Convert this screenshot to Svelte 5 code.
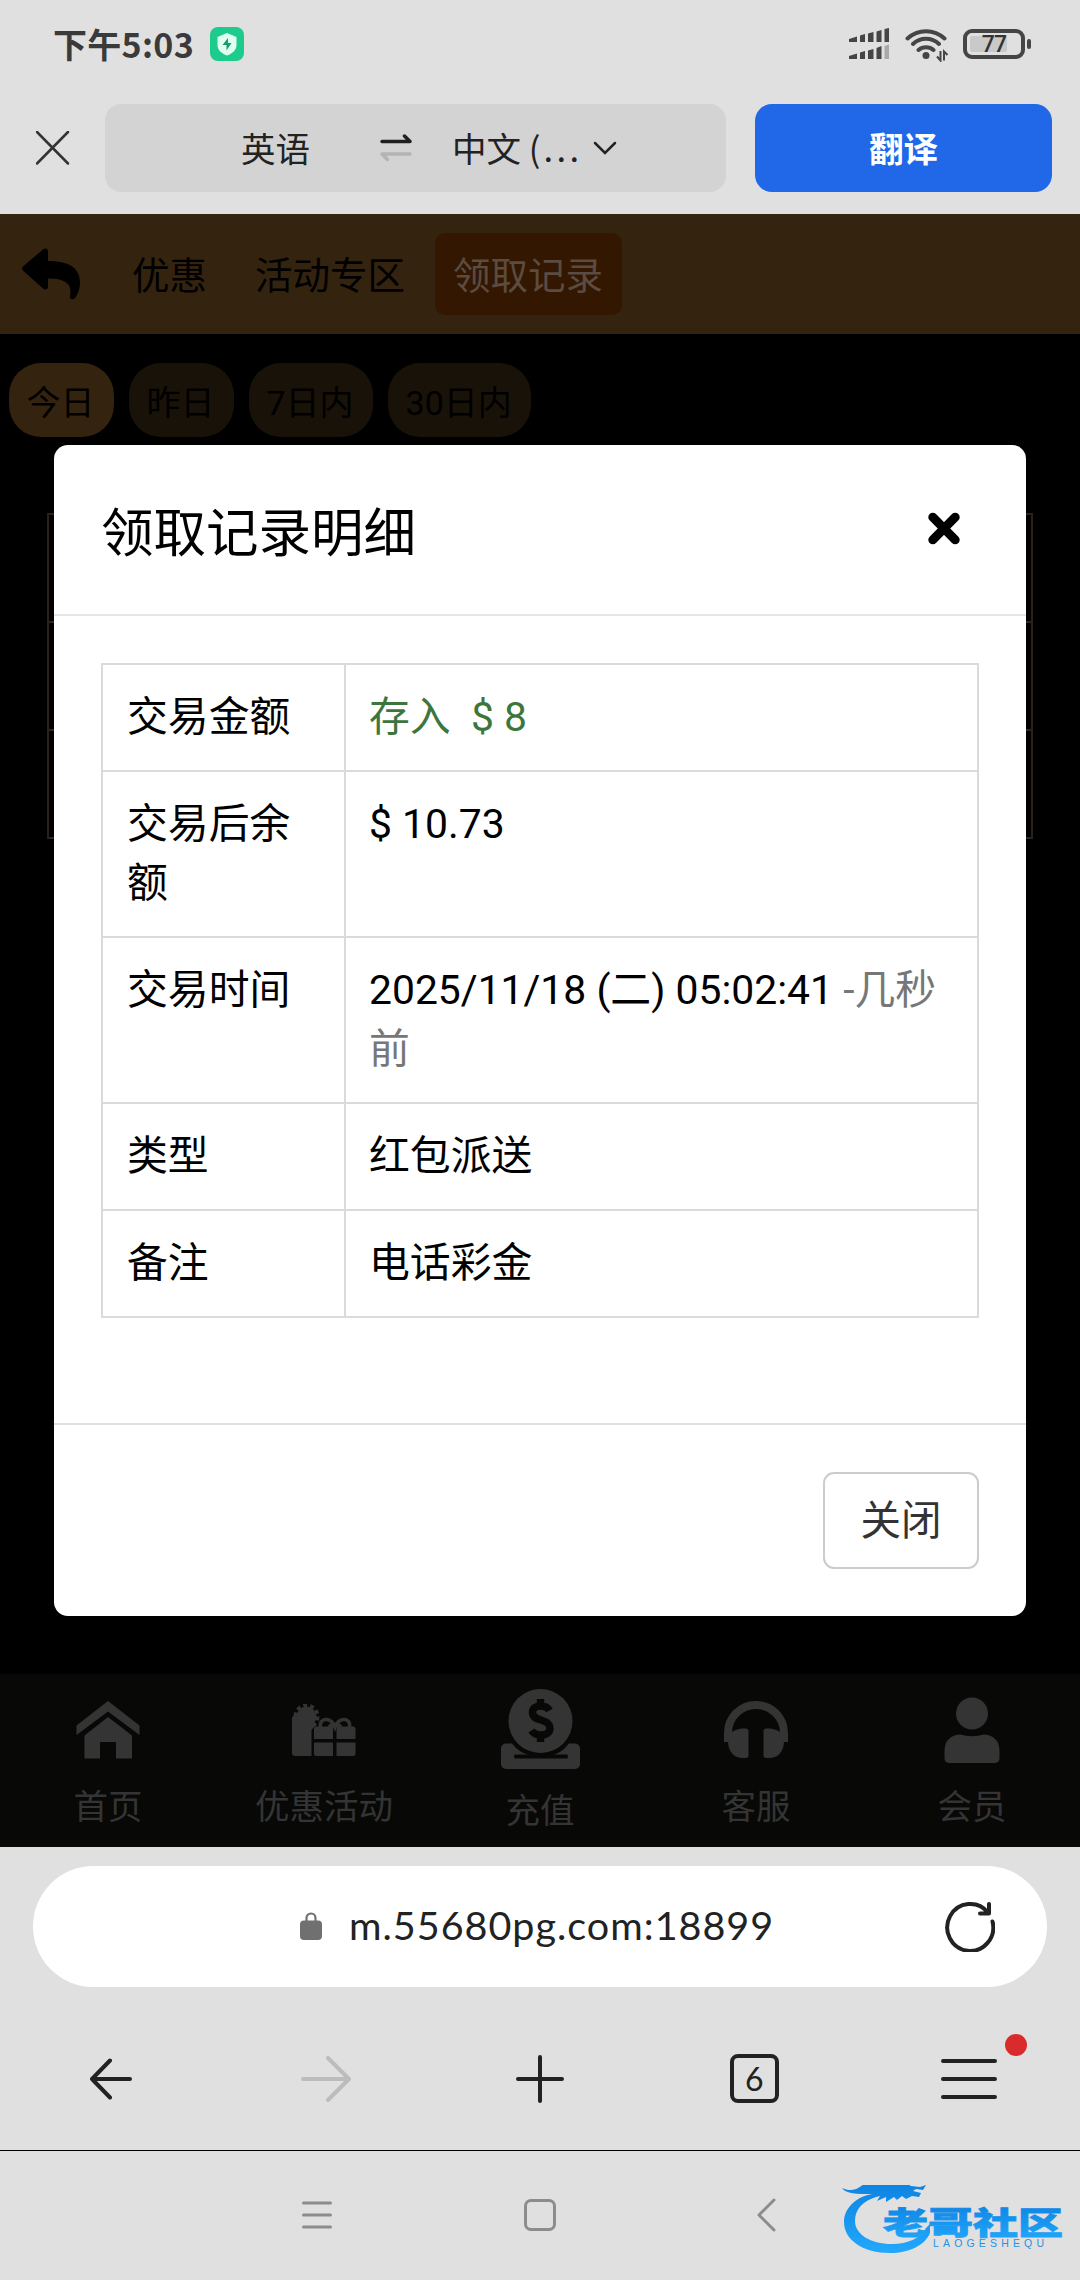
<script lang="ts">
  interface Row {
    label: string;
    value: string;
    kind?: string;
    note?: string;
  }

  const tabs = ["优惠", "活动专区", "领取记录"];
  const ranges = ["今日", "昨日", "7日内", "30日内"];

  const rows: Row[] = [
    { label: "交易金额", value: "存入 \u00a0$ 8", kind: "deposit" },
    { label: "交易后余额", value: "$ 10.73" },
    { label: "交易时间", value: "2025/11/18 (二) 05:02:41", note: "-几秒前" },
    { label: "类型", value: "红包派送" },
    { label: "备注", value: "电话彩金" },
  ];

  const nav = [
    { id: "home", label: "首页" },
    { id: "gift", label: "优惠活动" },
    { id: "coin", label: "充值" },
    { id: "service", label: "客服" },
    { id: "user", label: "会员" },
  ];

  let activeTab = $state("领取记录");
  let activeRange = $state("今日");
  let open = $state(true);
</script>

<div class="phone">
  <header class="status">
    <span class="time">下午5:03</span>
    <svg class="shield" width="34" height="34" viewBox="0 0 34 34" aria-hidden="true">
      <rect width="34" height="34" rx="8" fill="#1dcc8d" />
      <path d="M17 6l9.500 4v8c0 5-4 8.500-9.500 10.500C11.500 26.500 7.500 23 7.500 18v-8z" fill="#dffff2" />
      <path d="M18 11l-5.500 7h4v5.500l5-7.500h-3.500z" fill="#1a9c70" />
    </svg>
    <svg class="signal" width="41" height="32" viewBox="0 0 41 32" fill="#454545" aria-hidden="true">
      <path d="M0 11l8-2.500V14H0zM11 7.500l5-1.500v8h-5zM19 5.500L24.500 4v10H19zM27.500 3.500L32.500 2v12h-5zM35.500 1L40 0v14h-4.500z" />
      <path d="M0 28l8-2.500V31H0zM11 24.500l5-1.500v8h-5zM19 22.500l5.500-1.500v10H19zM27.500 20l5-2v13h-5z" />
      <path d="M35.500 18l4.500-1.500V31h-4.500z" fill="#a9a9a9" />
    </svg>
    <svg class="wifi" width="44" height="34" viewBox="0 0 44 34" fill="none" stroke="#454545" stroke-width="4" stroke-linecap="round" aria-hidden="true">
      <path d="M2.500 10.500a27 27 0 0 1 37 0M8 16a19 19 0 0 1 26 0M13.500 22a11.500 11.500 0 0 1 15 0" />
      <circle cx="21" cy="27.500" r="3.500" fill="#454545" stroke="none" />
      <path d="M35.500 23v9.500l-3.500-4M39 32.500V23.500l3.500 3.500" stroke-width="2" stroke-linecap="butt" />
    </svg>
    <div class="battery"><i></i><b>77</b></div>
  </header>

  <div class="translate">
    <svg width="34" height="34" viewBox="0 0 34 34" fill="none" stroke="#333" stroke-width="2.500" stroke-linecap="round" aria-hidden="true">
      <path d="M1 1l31 31.500M32 1L1 32.500" />
    </svg>
    <div class="langs">
      <span class="from">英语</span>
      <svg class="swap" width="32" height="28" viewBox="0 0 32 28" fill="none" stroke-width="3.500" stroke-linecap="round" stroke-linejoin="round" aria-hidden="true">
        <path d="M2 7.500h28L24.500 2" stroke="#1f1f1f" />
        <path d="M30 20H2l5.500 5.500" stroke="#b4b4b4" />
      </svg>
      <span class="to">中文 (<span class="dots">...</span></span>
      <svg class="chevron" width="24" height="14" viewBox="0 0 24 14" fill="none" stroke="#222" stroke-width="2.500" stroke-linecap="round" aria-hidden="true">
        <path d="M2 2l10 10L22 2" />
      </svg>
    </div>
    <button class="go">翻译</button>
  </div>

  <main class="page">
    <nav class="topbar">
      <svg width="60" height="52" viewBox="0 0 60 52" aria-hidden="true">
        <path d="M21 1.500c2.500-2 5-.5 5 2V13c20 0 32 6 32 22 0 5-2 11-5 15-2.500 2.500-6 1-5-2 2.500-11-3-17.500-22-17.500v8c0 3-2.500 4-5 2L1.500 23c-2-1.500-2-3.500 0-5z" />
      </svg>
      {#each tabs as tab}
        <button class="tab" class:active={tab === activeTab} onclick={() => (activeTab = tab)}>{tab}</button>
      {/each}
    </nav>

    <div class="ranges">
      {#each ranges as range}
        <button class="range" class:active={range === activeRange} onclick={() => (activeRange = range)}>{range}</button>
      {/each}
    </div>

    <div class="records">
      <div></div>
      <div></div>
      <div></div>
    </div>

    <nav class="bottom">
      {#each nav as item (item.id)}
        <div class="nav-item {item.id}">
          <div class="nav-icon">
            {#if item.id === "home"}
              <svg width="64" height="58" viewBox="0 0 64 58" fill="#343434">
                <path d="M32 0l31.500 24.500V34L32 10.500.5 34v-9.500z" />
                <path d="M32 16l24 18.500V57.500H40V41H24v16.500H8.500v-23z" />
              </svg>
            {:else if item.id === "gift"}
              <svg width="64" height="52" viewBox="0 0 64 52" fill="#343434">
                <path d="M3 10.500h20V22l-3.500 4v26H3a3 3 0 0 1-3-3V13.500z" />
                <circle cx="14.500" cy="12.500" r="10" />
                <circle cx="14.500" cy="12.500" r="11" fill="none" stroke="#343434" stroke-width="4" stroke-dasharray="3.800 3.100" />
                <path d="M24.500 22.500H41V35H22V25a2.500 2.500 0 0 1 2.500-2.500zM44.500 22.500H61a2.500 2.500 0 0 1 2.500 2.500v10h-19zM22 38.500h19V52H24.500a2.500 2.500 0 0 1-2.500-2.500zM44.500 38.500h19v11A2.500 2.500 0 0 1 61 52H44.500z" />
                <path d="M28.500 24c-1-6 2-9 6-8.500 4.500.5 7 3.500 8.500 7.500 1.500-4 4-7 8.500-7.500 4-.5 7 2.500 6 8.500M38 24c-1-3 1.500-4 5-1.500 3.500-2.500 6-1.500 5 1.500" fill="none" stroke="#343434" stroke-width="3.500" />
              </svg>
            {:else if item.id === "coin"}
              <svg width="79" height="80" viewBox="0 0 79 80">
                <path d="M5 54.500h6q7 9 16 11H14a2.500 2.500 0 0 0 0 4h52a2.500 2.500 0 0 0 0-4H53q8-2 15-11h6a5 5 0 0 1 5 5V75a5 5 0 0 1-5 5H5a5 5 0 0 1-5-5V59.500a5 5 0 0 1 5-5z" fill="#343434" />
                <circle cx="39.500" cy="32" r="32" fill="#343434" />
                <path d="M48.500 21.500c-2-3.500-5-4.500-9-4.500-5 0-8 2.500-8 6.500 0 4.500 3.500 6 8.500 7.500s9 3.500 9 8-3.500 7-9 7c-4.500 0-7.500-1.500-9.500-4.500M39.500 10v6m0 31v6" fill="none" stroke="#080807" stroke-width="7.500" />
              </svg>
            {:else if item.id === "service"}
              <svg width="64" height="57" viewBox="0 0 64 57" fill="#343434">
                <path d="M4 41V32a28 28 0 0 1 56 0v9" fill="none" stroke="#343434" stroke-width="8" />
                <path d="M8 31q5-3.500 11-3.500h3q2.500 0 2.500 2.500v24.500q0 2.500-2.500 2.500h-3Q6 57 4 42zM56 31q-5-3.500-11-3.500h-3q-2.500 0-2.500 2.500v24.500q0 2.500 2.500 2.500h3Q58 57 60 42z" />
              </svg>
            {:else}
              <svg width="56" height="66" viewBox="0 0 56 66" fill="#343434">
                <circle cx="28" cy="16.500" r="16" />
                <path d="M16 37.500q12 3.500 24 0Q55.500 39 55.500 54v7q0 5-5 5h-45q-5 0-5-5v-7Q.5 39 16 37.500z" />
              </svg>
            {/if}
          </div>
          <span class="nav-label">{item.label}</span>
        </div>
      {/each}
    </nav>

    {#if open}
      <div class="modal" role="dialog" aria-label="领取记录明细">
        <div class="modal-head">
          <h2>领取记录明细</h2>
          <button class="dismiss" aria-label="关闭" onclick={() => (open = false)}>
            <svg width="32" height="33" viewBox="0 0 32 33" stroke="#000" stroke-width="9" stroke-linecap="round">
              <path d="M4.800 5.200l22.400 22.600M27.200 5.200L4.800 27.800" />
            </svg>
          </button>
        </div>
        <div class="modal-body">
          <table>
            <tbody>
              {#each rows as row}
                <tr>
                  <th>{row.label}</th>
                  <td class={row.kind}>{row.value}{#if row.note}&nbsp;<span class="note">{row.note}</span>{/if}</td>
                </tr>
              {/each}
            </tbody>
          </table>
        </div>
        <div class="modal-foot">
          <button class="close" onclick={() => (open = false)}>关闭</button>
        </div>
      </div>
    {/if}
  </main>

  <footer class="browser">
    <div class="url">
      <svg class="lock" width="22" height="28" viewBox="0 0 22 28" aria-hidden="true">
        <rect y="8.500" width="22" height="19.500" rx="4" fill="#707070" />
        <path d="M6.500 10V6a4.500 4.500 0 0 1 9 0v4" fill="none" stroke="#707070" stroke-width="2.200" />
      </svg>
      <span class="host">m.55680pg.com:18899</span>
      <svg class="reload" width="50" height="52" viewBox="0 0 50 52" fill="none" stroke="#222" stroke-width="4" stroke-linecap="round" stroke-linejoin="round" aria-hidden="true">
        <path d="M47.500 21.500A23 23.500 0 1 1 43 12.500M44 4v9.500h-9" />
      </svg>
    </div>

    <div class="tools">
      <div class="tool">
        <svg width="42" height="42" viewBox="0 0 42 42" fill="none" stroke="#222" stroke-width="4" stroke-linecap="round" stroke-linejoin="round">
          <path d="M40 21H2M20 2.500L2 21l18 18.500" />
        </svg>
      </div>
      <div class="tool">
        <svg width="50" height="46" viewBox="0 0 50 46" fill="none" stroke="#bcbcbc" stroke-width="4" stroke-linecap="round" stroke-linejoin="round">
          <path d="M2 23h46M27 2l21 21-21 21" />
        </svg>
      </div>
      <div class="tool">
        <svg width="48" height="48" viewBox="0 0 48 48" fill="none" stroke="#222" stroke-width="4" stroke-linecap="round">
          <path d="M2 24h44M24 2v44" />
        </svg>
      </div>
      <div class="tool"><span class="count">6</span></div>
      <div class="tool menu">
        <svg width="56" height="42" viewBox="0 0 56 42" fill="none" stroke="#222" stroke-width="4" stroke-linecap="round">
          <path d="M2 3h52M2 21h52M2 39h52" />
        </svg>
        <i class="dot"></i>
      </div>
    </div>
  </footer>

  <div class="system">
    <svg class="recent" width="30" height="30" viewBox="0 0 30 30" fill="none" stroke="#8c8c8c" stroke-width="3" stroke-linecap="round">
      <path d="M1.500 3h27M1.500 15h27M1.500 27h27" />
    </svg>
    <span class="homekey"></span>
    <svg class="backkey" width="19" height="34" viewBox="0 0 19 34" fill="none" stroke="#8c8c8c" stroke-width="3" stroke-linecap="round" stroke-linejoin="round">
      <path d="M17 2L2 17l15 15" />
    </svg>
    <svg class="mark" width="222" height="74" viewBox="0 0 222 74">
      <defs>
        <linearGradient id="blue" x1="0" y1="0" x2="0" y2="1">
          <stop offset="0" stop-color="#0b7fe0" />
          <stop offset="1" stop-color="#22a8fb" />
        </linearGradient>
      </defs>
      <path d="M30 9C13 12 2 24 2 37c0 18 19 31 46 31 20 0 35-8 40-20v-9l-4 4c-5 10-18 16-34 16-22 0-37-10-37-23 0-12 8-20 21-24l4-1-3 5 9-4 0 5 8-5 3 3 5-4 4 3 6-3 7 1 2-4-8-2 3-2 7 1 3-5-6 2-9-1-7-4-9 1-8-1-6-2-12-5 3 6-6 1C14 7 7 6 0 3c4 6 15 6 30 6z" fill="url(#blue)" />
      <text class="mark-cn" x="41" y="48.500" textLength="180" lengthAdjust="spacingAndGlyphs" fill="url(#blue)" stroke="url(#blue)">老哥社区</text>
      <text class="mark-en" x="91" y="62" textLength="111" fill="#2792e0">LAOGESHEQU</text>
    </svg>
  </div>
</div>

<style>
  :global(body) {
    margin: 0;
    background: #e0e0e0;
  }

  .phone {
    width: 1080px;
    height: 2280px;
    display: flex;
    flex-direction: column;
    overflow: hidden;
    background: #e0e0e0;
    color: #222;
    font-family: Roboto, "Noto Sans CJK SC", sans-serif;
  }

  svg {
    display: block;
    flex-shrink: 0;
  }

  button {
    border: none;
    padding: 0;
    margin: 0;
    background: none;
    font-family: inherit;
    color: inherit;
  }

  .status {
    height: 88px;
    box-sizing: border-box;
    padding: 0 49px 0 53px;
    display: flex;
    align-items: center;
  }

  .time {
    font-family: "Noto Sans CJK SC", sans-serif;
    font-size: 34px;
    font-weight: 700;
    line-height: 50px;
    color: #3a3a3a;
    width: 157px;
    letter-spacing: 0.3px;
    white-space: nowrap;
  }

  .signal {
    margin-left: auto;
  }

  .wifi {
    margin: 2px 14px 0 15px;
  }

  .battery {
    position: relative;
    width: 62px;
    height: 30px;
    box-sizing: border-box;
    border: 4px solid #454545;
    border-radius: 9px;
    margin-right: 6px;
    display: flex;
    align-items: center;
    justify-content: center;
  }

  .battery::after {
    content: "";
    position: absolute;
    right: -10px;
    top: 6px;
    width: 4px;
    height: 10px;
    border-radius: 2px;
    background: #454545;
  }

  .battery i {
    position: absolute;
    left: 3px;
    top: 3px;
    width: 37px;
    height: 16px;
    border-radius: 2px;
    background: #c9c9c9;
  }

  .battery b {
    position: relative;
    margin-top: 1px;
    font: 500 23px/22px Roboto, sans-serif;
    letter-spacing: -0.8px;
    color: #333;
  }

  .translate {
    height: 126px;
    box-sizing: border-box;
    padding: 16px 28px 22px 36px;
    display: flex;
    align-items: center;
  }

  .langs {
    width: 621px;
    height: 88px;
    margin: 0 29px 0 35px;
    border-radius: 16px;
    background: #d3d3d3;
    display: flex;
    align-items: center;
    font: 34.5px/50px "Noto Sans CJK SC", sans-serif;
  }

  .from {
    margin: -2px 0 0 136px;
    width: 139px;
  }

  .swap {
    margin-right: 40px;
  }

  .to {
    margin-top: -2px;
    width: 133px;
    white-space: nowrap;
  }

  .dots {
    margin-left: 3px;
    letter-spacing: 3.500px;
  }

  .chevron {
    margin: 0 0 0 8px;
  }

  .go {
    width: 297px;
    height: 88px;
    padding-bottom: 2px;
    border-radius: 17px;
    background: #2168e9;
    color: #fff;
    font: 700 34.5px/50px "Noto Sans CJK SC", sans-serif;
  }

  .page {
    position: relative;
    height: 1633px;
    background: #000;
    color: #000;
    display: flex;
    flex-direction: column;
  }

  .topbar {
    height: 120px;
    box-sizing: border-box;
    padding-left: 22px;
    display: flex;
    align-items: center;
    background: #34230e;
  }

  .tab {
    height: 82px;
    padding: 0 19px 0 18px;
    margin-left: 11px;
    border-radius: 10px;
    font-size: 37.5px;
    line-height: 87px;
  }

  .topbar svg + .tab {
    margin-left: 32px;
  }

  .tab.active {
    background: #331700;
    color: #5b4b40;
  }

  .ranges {
    padding: 29px 9px 0;
    height: 74px;
    display: flex;
    gap: 15px;
  }

  .range {
    height: 74px;
    padding: 0 19.5px 0 17.5px;
    border-radius: 32px;
    background: #191208;
    font-size: 34px;
    line-height: 80px;
  }

  .range.active {
    background: #34230e;
  }

  .records {
    margin: 76px 47px 0;
    border: 2px solid #2a211b;
    border-bottom: none;
  }

  .records div {
    height: 106px;
    border-bottom: 2px solid #2a2625;
  }

  .bottom {
    height: 173px;
    box-sizing: border-box;
    margin-top: auto;
    padding-top: 12px;
    display: grid;
    grid-template-columns: repeat(5, 1fr);
    background: #080807;
    color: #343434;
  }

  .nav-item {
    display: flex;
    flex-direction: column;
    align-items: center;
  }

  .nav-icon {
    height: 87px;
    display: flex;
    align-items: center;
  }

  .coin .nav-icon {
    margin-top: -1px;
  }

  .nav-label {
    margin-top: 9px;
    font-size: 34.5px;
    line-height: 50px;
  }

  .coin .nav-label {
    margin-top: 14px;
  }

  .modal {
    position: absolute;
    top: 231px;
    left: 54px;
    width: 972px;
    height: 1171px;
    border-radius: 14px;
    background: #fff;
    display: flex;
    flex-direction: column;
  }

  .modal-head {
    height: 171px;
    box-sizing: border-box;
    padding: 0 66px 0 47px;
    border-bottom: 2px solid #e5e5e5;
    display: flex;
    align-items: center;
    justify-content: space-between;
  }

  h2 {
    margin: 8px 0 0;
    font-size: 52.5px;
    font-weight: 400;
    line-height: 78px;
  }

  .dismiss {
    margin-bottom: 3px;
  }

  .modal-body {
    flex: 1;
    padding: 47px 47px 0;
  }

  table {
    width: 878px;
    table-layout: fixed;
    border-collapse: collapse;
    font-size: 40.85px;
    line-height: 59px;
  }

  th,
  td {
    border: 2px solid #dadada;
    padding: 23px;
    font-weight: 400;
    text-align: left;
    vertical-align: top;
  }

  th {
    width: 195px;
    padding: 23px 22px 23px 24px;
  }

  .deposit {
    color: #3c763d;
  }

  .note {
    color: #777;
  }

  .modal-foot {
    height: 193px;
    box-sizing: border-box;
    border-top: 2px solid #e0e0e0;
    padding: 47px 47px 0;
    display: flex;
    justify-content: flex-end;
  }

  .close {
    width: 156px;
    height: 97px;
    border: 2px solid #ccc;
    border-radius: 11px;
    font-size: 40.5px;
    line-height: 90px;
    color: #333;
  }

  .browser {
    height: 304px;
    box-sizing: border-box;
    padding: 19px 0 0;
    border-bottom: 1px solid #000;
    flex-shrink: 0;
  }

  .url {
    height: 121px;
    box-sizing: border-box;
    margin: 0 33px;
    padding: 0 52px 0 267px;
    border-radius: 61px;
    background: #fff;
    display: flex;
    align-items: center;
  }

  .lock {
    margin-top: -1px;
  }

  .host {
    margin: -3px 0 0 27px;
    font: 39.5px/50px Lato, sans-serif;
    letter-spacing: 1px;
  }

  .reload {
    margin: -1px 0 0 auto;
  }

  .tools {
    height: 183px;
    padding: 0 4px;
    display: grid;
    grid-template-columns: repeat(5, 1fr);
  }

  .tool {
    position: relative;
    display: flex;
    align-items: center;
    justify-content: center;
  }

  .count {
    width: 49px;
    height: 49px;
    box-sizing: border-box;
    border: 4px solid #222;
    border-radius: 8px;
    font: 32px/41px Lato, sans-serif;
    text-align: center;
  }

  .dot {
    position: absolute;
    top: 47px;
    right: 49px;
    width: 22px;
    height: 22px;
    border-radius: 50%;
    background: #d92b2b;
  }

  .system {
    flex: 1;
    display: flex;
    align-items: center;
    padding: 0 0 2px 302px;
  }

  .homekey {
    width: 32px;
    height: 32px;
    box-sizing: border-box;
    border: 3px solid #8c8c8c;
    border-radius: 7px;
    margin: 0 201px 0 192px;
  }

  .mark {
    margin: 15px 0 0 66px;
  }

  .mark-cn {
    font: 900 31px "Noto Sans CJK SC", sans-serif;
    stroke-width: 0.8px;
  }

  .mark-en {
    font: 10.5px "Liberation Sans", sans-serif;
  }
</style>
